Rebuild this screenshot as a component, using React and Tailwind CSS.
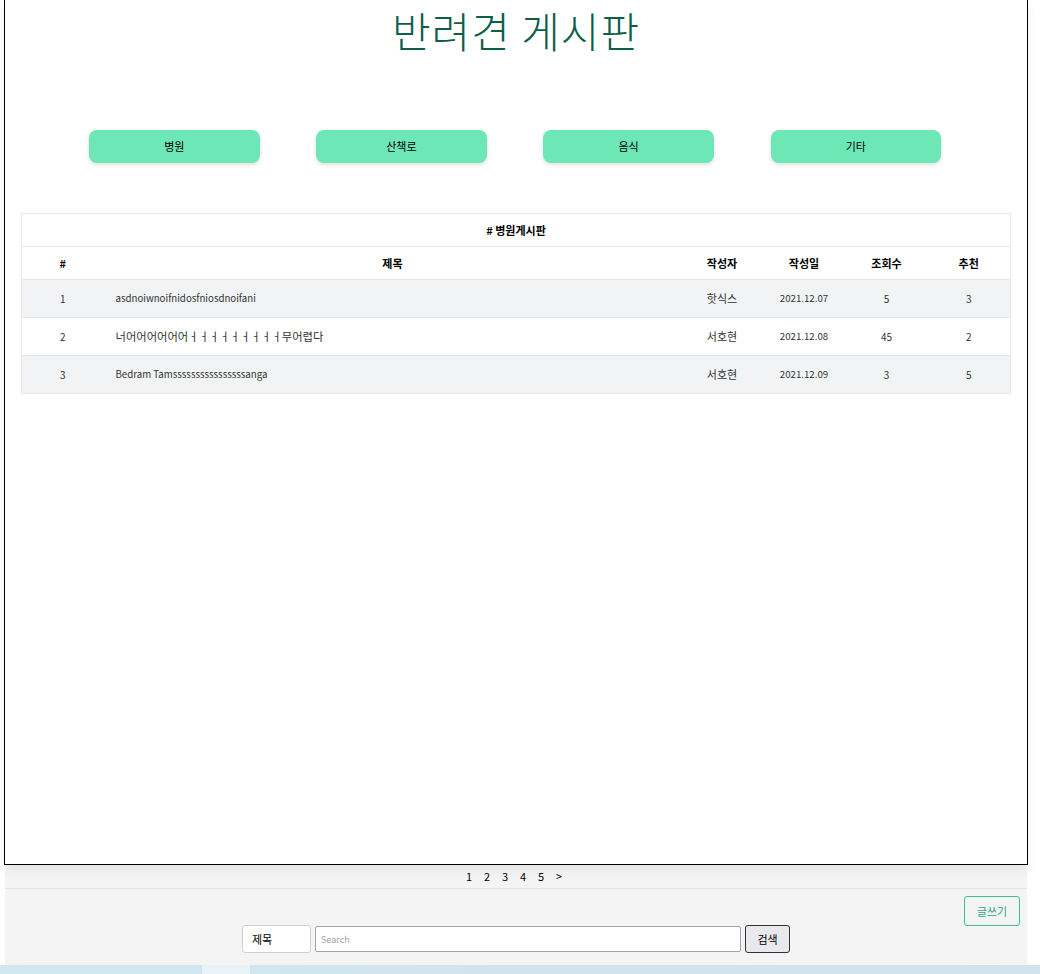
const posts = [
  { id: 1, title: "asdnoiwnoifnidosfniosdnoifani", latin: true, writer: "핫식스", date: "2021.12.07", views: 5, likes: 3 },
  { id: 2, title: "너어어어어어어ㅓㅓㅓㅓㅓㅓㅓㅓㅓ무어렵다", latin: false, writer: "서호현", date: "2021.12.08", views: 45, likes: 2 },
  { id: 3, title: "Bedram Tamssssssssssssssssanga", latin: true, writer: "서호현", date: "2021.12.09", views: 3, likes: 5 },
];

const categories = ["병원", "산책로", "음식", "기타"];

function App() {
  return (
    <div
      className="min-h-[974px] w-[1040px] bg-white text-black"
      style={{ fontFamily: '"Noto Sans CJK KR", "Noto Sans", sans-serif' }}
    >
      <div className="ml-[5px] w-[1022px] bg-[#f4f4f4]">
        <div className="relative -ml-px w-[1024px] h-[865px] border border-black border-t-0 bg-white shadow-[0_6px_10px_rgba(0,0,0,0.06)]">
          <h1 className="pt-[2px] text-center text-[42px] leading-[56px] font-light text-[#0b5e4a] tracking-[1px]">
            반려견 게시판
          </h1>

          <div className="mt-[72px] flex pl-[84px] gap-[56.7px]">
            {categories.map((c) => (
              <button
                key={c}
                className="w-[170.5px] h-[33px] rounded-[8px] bg-[#6ee7b7] text-[11px] text-black shadow-[0_2px_4px_rgba(0,0,0,0.12)]"
              >
                {c}
              </button>
            ))}
          </div>

          <table className="mt-[50px] ml-[16px] w-[990px] border-collapse text-[11px] table-fixed">
            <colgroup>
              <col className="w-[82px]" />
              <col />
              <col className="w-[81px]" />
              <col className="w-[83px]" />
              <col className="w-[82px]" />
              <col className="w-[83px]" />
            </colgroup>
            <thead>
              <tr className="h-[33px] border border-[#e5e7eb]">
                <th colSpan={6} className="font-bold text-center">
                  # 병원게시판
                </th>
              </tr>
              <tr className="h-[33px] border border-[#e5e7eb]">
                <th className="font-bold">#</th>
                <th className="font-bold">제목</th>
                <th className="font-bold">작성자</th>
                <th className="font-bold">작성일</th>
                <th className="font-bold">조회수</th>
                <th className="font-bold">추천</th>
              </tr>
            </thead>
            <tbody className="text-[#333]">
              {posts.map((p, i) => (
                <tr
                  key={p.id}
                  className={
                    i % 2 === 0
                      ? "h-[38px] border border-[#e5e7eb] bg-[#f2f3f5]"
                      : "h-[38px] border border-[#e5e7eb] bg-white"
                  }
                >
                  <td className="text-center text-[10px]">{p.id}</td>
                  <td className={p.latin ? "pl-[12px] text-[9.7px]" : "pl-[12px] text-[11.3px]"}>{p.title}</td>
                  <td className="text-center">{p.writer}</td>
                  <td className="text-center text-[9.7px]">{p.date}</td>
                  <td className="text-center text-[10px]">{p.views}</td>
                  <td className="text-center text-[10px]">{p.likes}</td>
                </tr>
              ))}
            </tbody>
          </table>
        </div>

        <div className="flex h-[24px] items-center justify-center gap-[10px] border-b border-[#e3e3e3] pr-[4px] text-[11px]">
          {["1", "2", "3", "4", "5", ">"].map((n) => (
            <span key={n} className="w-[8px] text-center">
              {n}
            </span>
          ))}
        </div>

        <div className="relative h-[76px]">
          <button className="absolute right-[7px] top-[7px] w-[56px] h-[30px] rounded-[3px] border border-[#3cc28f] text-[11px] text-[#2fa97c]">
            글쓰기
          </button>
          <div className="flex items-center pt-[36px] pl-[237px]">
            <div className="flex h-[28px] w-[69px] items-center rounded-[3px] border border-[#cfcfd4] bg-white pl-[9px] text-[11px]">
              제목
            </div>
            <input
              placeholder="Search"
              className="ml-[4px] h-[26px] w-[426px] rounded-[2px] border border-[#a3a3ab] bg-white px-[5px] text-[9px] placeholder:text-[#a0a0a8]"
            />
            <button className="ml-[4px] h-[28px] w-[45px] rounded-[3px] border border-[#333] bg-[#e9e9ed] text-[11px]">
              검색
            </button>
          </div>
        </div>
      </div>

      <div className="flex h-[9px] w-[1040px] bg-[linear-gradient(90deg,#d1e7ef,#d2e2ec)]">
        <div className="ml-[202px] h-full w-[48px] bg-[#e9f3f7]" />
      </div>
    </div>
  );
}

export default App;
